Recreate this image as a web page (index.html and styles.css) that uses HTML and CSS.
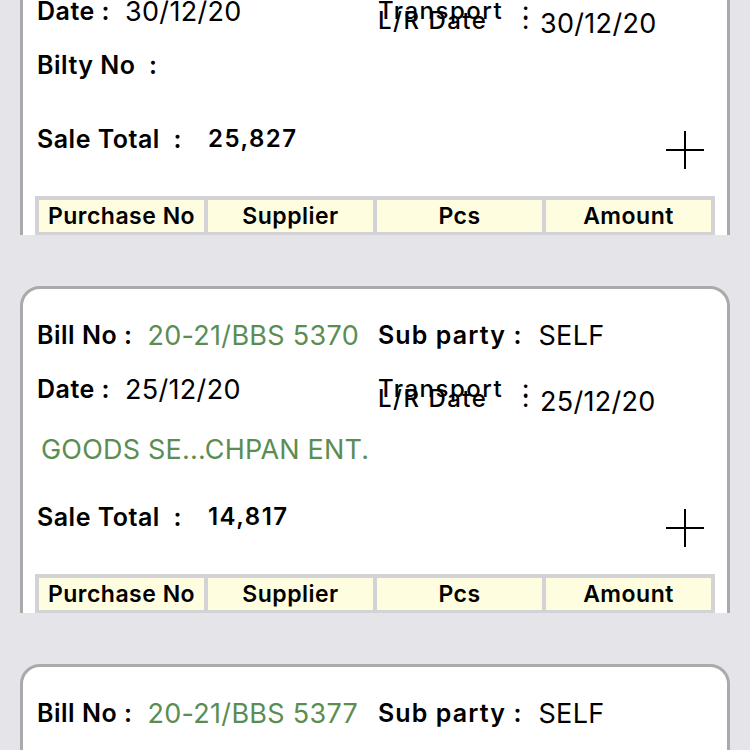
FILE: index.html
```html
<!DOCTYPE html>
<html>
<head>
<meta charset="utf-8">
<link rel="stylesheet" href="styles.css">
</head>
<body>
<div class="list">
  <div class="cell">
    <div class="card">
      <div class="info">
        <div class="field"><span class="label">Bill No :</span><span class="value green">20-21/BBS 5369</span></div>
        <div class="field"><span class="label wide">Sub party :</span><span class="value">SELF</span></div>
        <div class="field"><span class="label">Date :</span><span class="value">30/12/20</span></div>
        <div class="stack">
          <div class="field transport"><span class="lbl-fixed">Transport</span><span class="colon">:</span></div>
          <div class="field lrdate"><span class="lbl-fixed">L/R Date</span><span class="colon">:</span><span class="value lrval">30/12/20</span></div>
        </div>
        <div class="field bilty"><span class="label">Bilty No&nbsp;&nbsp;:</span></div>
      </div>
      <div class="sale">
        <div class="field"><span class="label">Sale Total&nbsp; :</span><span class="total">25,827</span></div>
        <svg class="plus" width="38" height="38" viewBox="0 0 38 38"><path d="M19 0V38M0 19H38" stroke="#000" stroke-width="2"/></svg>
      </div>
      <div class="table">
        <div class="th">Purchase No</div><div class="th">Supplier</div><div class="th">Pcs</div><div class="th">Amount</div>
      </div>
    </div>
  </div>
  <div class="cell">
    <div class="card">
      <div class="info">
        <div class="field"><span class="label">Bill No :</span><span class="value green">20-21/BBS 5370</span></div>
        <div class="field"><span class="label wide">Sub party :</span><span class="value">SELF</span></div>
        <div class="field"><span class="label">Date :</span><span class="value">25/12/20</span></div>
        <div class="stack">
          <div class="field transport"><span class="lbl-fixed">Transport</span><span class="colon">:</span></div>
          <div class="field lrdate"><span class="lbl-fixed">L/R Date</span><span class="colon">:</span><span class="value lrval">25/12/20</span></div>
        </div>
        <div class="field goods"><span class="value green">GOODS SE...CHPAN ENT.</span></div>
      </div>
      <div class="sale">
        <div class="field"><span class="label">Sale Total&nbsp; :</span><span class="total">14,817</span></div>
        <svg class="plus" width="38" height="38" viewBox="0 0 38 38"><path d="M19 0V38M0 19H38" stroke="#000" stroke-width="2"/></svg>
      </div>
      <div class="table">
        <div class="th">Purchase No</div><div class="th">Supplier</div><div class="th">Pcs</div><div class="th">Amount</div>
      </div>
    </div>
  </div>
  <div class="cell">
    <div class="card">
      <div class="info">
        <div class="field"><span class="label">Bill No :</span><span class="value green">20-21/BBS 5377</span></div>
        <div class="field"><span class="label wide">Sub party :</span><span class="value">SELF</span></div>
        <div class="field"><span class="label">Date :</span><span class="value">25/12/20</span></div>
        <div class="stack">
          <div class="field transport"><span class="lbl-fixed">Transport</span><span class="colon">:</span></div>
          <div class="field lrdate"><span class="lbl-fixed">L/R Date</span><span class="colon">:</span><span class="value lrval">25/12/20</span></div>
        </div>
      </div>
    </div>
  </div>
</div>
</body>
</html>
```
FILE: styles.css
```css
html, body {
  margin: 0;
  padding: 0;
  background: #e4e4e9;
  overflow: hidden;
  height: 750px;
}
body {
  font-family: Inter, "Noto Sans", sans-serif;
  color: #000;
}
.list {
  display: flex;
  flex-direction: column;
  gap: 51px;
  margin-top: -92px;
  padding: 0 20px;
}
.cell {
  height: 327px;
  overflow: hidden;
  flex-shrink: 0;
}
.card {
  background: #fff;
  border: 3px solid #aaaaaa;
  border-radius: 20px;
  height: 420px;
  padding: 31px 12px 0 13px;
}
.info {
  display: grid;
  grid-template-columns: 341px 1fr;
  grid-template-rows: 30px 30px 30px;
  row-gap: 24px;
  padding-left: 1px;
}
.field {
  display: flex;
  align-items: center;
  height: 30px;
  white-space: nowrap;
}
.label {
  font-size: 25px;
  font-weight: 600;
  letter-spacing: 0.5px;
  margin-right: 15px;
}
.label.wide {
  letter-spacing: 1.1px;
  margin-right: 16px;
}
.value {
  font-size: 27px;
  font-weight: 400;
  letter-spacing: 0.3px;
}
.green {
  color: #5b8d53;
}
.stack {
  display: grid;
}
.stack > .field {
  grid-area: 1 / 1;
}
.transport {
  margin-top: -1px;
}
.lrdate {
  margin-top: 9px;
}
.lbl-fixed {
  width: 144px;
  font-weight: 500;
  font-size: 24px;
  letter-spacing: 1.5px;
  flex-shrink: 0;
}
.colon {
  font-weight: 500;
  font-size: 24px;
  width: 8px;
  flex-shrink: 0;
}
.lrval {
  margin-top: 6px;
  margin-left: 10px;
}
.bilty {
  grid-column: 1 / 3;
}
.goods {
  grid-column: 1 / 3;
  margin-top: 6px;
  padding-left: 4px;
}
.goods .value {
  letter-spacing: 0.2px;
}
.sale {
  display: flex;
  justify-content: space-between;
  align-items: flex-start;
  margin-top: 44px;
  padding-left: 1px;
  padding-right: 11px;
}
.sale .label {
  margin-right: 26px;
}
.total {
  font-size: 24px;
  font-weight: 600;
  letter-spacing: 1.5px;
  margin-top: -2px;
}
.plus {
  margin-top: 7px;
  display: block;
}
.table {
  display: grid;
  grid-template-columns: repeat(4, 1fr);
  gap: 4px;
  padding: 4px;
  background: #d2d2d7;
  margin-top: 27px;
  margin-left: -1px;
}
.th {
  background: #fefde0;
  height: 32px;
  display: flex;
  align-items: center;
  justify-content: center;
  font-size: 23px;
  font-weight: 600;
  letter-spacing: 0.5px;
}
```
